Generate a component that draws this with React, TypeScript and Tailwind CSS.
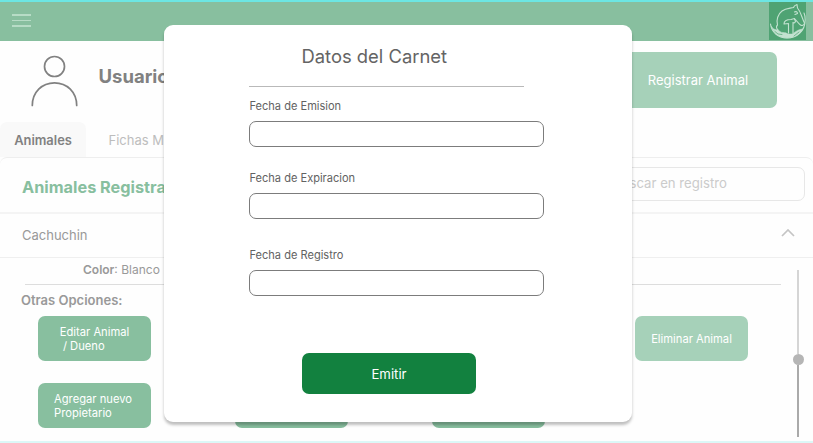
import React from "react";

function ActionButton({ children, light }: { children?: React.ReactNode; light?: boolean }) {
  return (
    <button
      className={`flex h-[45px] w-[113px] items-center justify-center rounded-[7px] text-left text-[11.200px] leading-[14px] whitespace-pre text-white ${light ? "bg-[#a6d1b9]" : "bg-[#88bf9f]"}`}
    >
      {children}
    </button>
  );
}

function Field({ label, className }: { label: string; className: string }) {
  return (
    <label className={`block ${className}`}>
      <span className="block h-[14px] pl-[0.500px] text-[11.050px] leading-[14px] text-[#626262]">{label}</span>
      <input className="mt-[8px] block h-[26px] w-[295px] rounded-[7px] border border-[#7c7c7c] bg-white px-2 text-xs outline-none" />
    </label>
  );
}

function Logo() {
  return (
    <svg className="h-[38px] w-[37px] bg-[#4fa373]" viewBox="0 0 37 38" fill="none" stroke="#c3e2d0" strokeWidth="1.100" strokeLinecap="round" strokeLinejoin="round">
      <path d="M9 28C7 26 7.500 24 8.500 23C7 18 9 12 13 9C17 6 21 6.500 24.500 5.500C25 3.500 26.500 3 28 2.500L28.500 6C32 10 32.500 15 35.500 21C35 23.500 33 24 31.500 23C29 21.500 28.500 19 25.500 17" />
      <path d="M1.500 22C2.500 30 9 36 18 36C28 36 36 29 36.200 18C36.200 15 36 13 35 11" />
      <path d="M25.500 10C27 9 28.500 10 28.500 11.500L26 12.500" />
      <path d="M15 22C15 19 18 17.500 22 17.500L25.500 16.500L26.500 19.500C25.500 21.500 24.500 21 24 20.500V31M15 22L19.500 21.500V31" />
      <path d="M2.500 24.500C5 29 8 26.500 11 29.500C13 31.500 16 29.500 19 32H23C26 30.500 28 27.500 34 27C30.500 33 25 36 18 36C10.500 36 4.500 31 2.500 24.500Z" fill="#c3e2d0" strokeWidth=".5" />
      <path d="M6 29.500L9 32L13 32.500M25 34L30 30" stroke="#4fa373" strokeWidth=".7" />
    </svg>
  );
}

export default function App() {
  return (
    <div className="relative flex h-[443px] w-[813px] flex-col overflow-hidden bg-[#fefefe] font-['Inter',sans-serif]">
      <header className="flex h-[41px] shrink-0 items-start justify-between border-t-2 border-[#6ce6e3] bg-[#88bf9f] pr-[7px] pl-[12px]">
        <div className="mt-[12px] flex w-[19px] flex-col gap-[4px]">
          <i className="h-[1.500px] bg-[#b7dcc6]" />
          <i className="h-[1.500px] bg-[#b7dcc6]" />
          <i className="h-[1.500px] bg-[#b7dcc6]" />
        </div>
        <Logo />
      </header>

      <section className="flex h-[81px] shrink-0 items-start pl-[31px]">
        <svg className="mt-[14px] h-[53px] w-[47px]" viewBox="0 0 47 53" fill="none" stroke="#818181" strokeWidth="1.700" strokeLinecap="round">
          <circle cx="23.500" cy="11.500" r="10" />
          <path d="M1.300 50.500C1.300 37 11 27.800 23.500 27.800S45.700 37 45.700 50.500" />
        </svg>
        <h1 className="mt-[22px] ml-[20.500px] text-[18.500px] leading-[26px] font-bold text-[#818181]">Usuario</h1>
        <button className="mt-[11px] ml-auto mr-[36px] h-[56px] w-[158px] rounded-[7px] bg-[#a6d1b9] pt-[2px] text-[13px] text-white">Registrar Animal</button>
      </section>

      <nav className="flex h-[35px] shrink-0 text-[13px]">
        <div className="flex w-[86px] items-center justify-center rounded-t-[7px] bg-[#f9f9f9] pt-[2px] text-[12.900px] font-semibold text-[#818181]">Animales</div>
        <div className="flex items-center pt-[2px] pl-[22.500px] text-[#bdbdbd]">Fichas Medicas</div>
      </nav>

      <section className="flex h-[57px] shrink-0 items-center justify-between rounded-t-[7px] border-t border-b-2 border-t-[#eeeeee] border-b-[#f4f4f4] pr-[8px] pl-[22px]">
        <h2 className="mt-[4px] text-[16.300px] font-bold text-[#88bf9f]">Animales Registrados</h2>
        <div className="mt-[-3px] flex h-[34px] w-[220px] items-center rounded-[7px] border border-[#e7e7e7] pt-[1px] pl-[27px] text-[13.200px] text-[#cbcbcb]">Buscar en registro</div>
      </section>

      <section className="flex h-[44px] shrink-0 items-center justify-between border-b border-[#efefef] pr-[18px] pl-[22px]">
        <span className="text-[13px] text-[#999999]">Cachuchin</span>
        <svg className="mt-[-6px] h-[8px] w-[14px]" viewBox="0 0 14 8" fill="none" stroke="#c4c4c4" strokeWidth="1.700">
          <path d="M1 7L7 1L13 7" />
        </svg>
      </section>

      <section className="flex flex-1">
        <div className="w-[781px]">
          <p className="h-[26px] pt-[3px] pl-[83px] text-[12px] leading-[18px] text-[#999999]"><b className="font-semibold">Color</b>: Blanco</p>
          <hr className="ml-[25px] border-[#dddddd]" />
          <h3 className="h-[31px] pt-[6px] pl-[21px] text-[13px] leading-[18px] font-semibold text-[#999999]">Otras Opciones:</h3>
          <div className="flex gap-[84px] pl-[38px]">
            <ActionButton>{"Editar Animal\n / Dueno"}</ActionButton>
            <ActionButton />
            <ActionButton />
            <div className="ml-[6px]"><ActionButton light>Eliminar Animal</ActionButton></div>
          </div>
          <div className="mt-[22px] flex gap-[84px] pl-[38px]">
            <ActionButton><span className="mr-[3px]">{"Agregar nuevo\nPropietario"}</span></ActionButton>
            <ActionButton />
            <ActionButton />
          </div>
        </div>
        <div className="mt-[12px] ml-[11px] flex h-[167px] w-[12px] flex-col items-center">
          <i className="h-[84px] w-[2px] bg-[#d5d5d5]" />
          <i className="h-[11px] w-[11px] shrink-0 rounded-full bg-[#b5b5b5]" />
          <i className="w-[2px] flex-1 bg-[#aaaaaa]" />
        </div>
      </section>
      <footer className="h-[2px] shrink-0 bg-[#dcf8f7]" />

      <main className="absolute top-[25px] left-[163.500px] h-[397px] w-[468px] rounded-[9px] bg-white pl-[85.500px] shadow-[0_3px_3px_rgba(0,0,0,0.25)]">
        <h2 className="pt-[19px] pl-[52.500px] text-[18.400px] leading-[24px] text-[#646464]">Datos del Carnet</h2>
        <hr className="mt-[18px] w-[275px] border-[#b9b9b9]" />
        <Field label="Fecha de Emision" className="mt-[12px]" />
        <Field label="Fecha de Expiracion" className="mt-[24px]" />
        <Field label="Fecha de Registro" className="mt-[29px]" />
        <button className="mt-[57px] ml-[53px] h-[41px] w-[174px] rounded-[7px] bg-[#12813f] pt-[2px] text-[13.200px] text-white">Emitir</button>
      </main>
    </div>
  );
}
